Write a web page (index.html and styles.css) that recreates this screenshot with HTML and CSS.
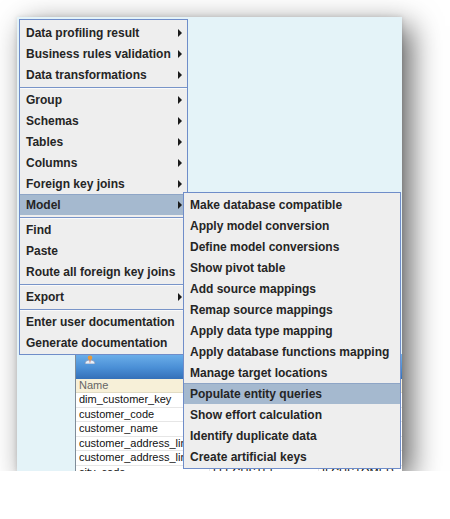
FILE: index.html
```html
<!DOCTYPE html>
<html lang="en">
<head>
    <meta charset="UTF-8">
    <title>Model menu</title>
    <link rel="stylesheet" href="styles.css">
</head>
<body>

<div class="shot">
    <div class="window">
        <div class="window-header">
            <svg class="user-icon" width="12" height="9" viewBox="0 0 12 9">
                <path d="M1 9 C1 6 3 5 6 5 C9 5 11 6 11 9 Z" fill="#e8f0fa" stroke="#7d95b8" stroke-width="0.8"/>
                <circle cx="6" cy="2.8" r="2.3" fill="#e89a3c"/>
                <path d="M5.4 5.2 L6 8.6 L6.6 5.2 Z" fill="#d0522c"/>
            </svg>
        </div>
        <div class="grid">
            <div class="row head">
                <span class="c1">Name</span><span class="c2"></span><span class="c3"></span>
            </div>
            <div class="row"><span class="c1">dim_customer_key</span><span class="c2"></span><span class="c3"></span></div>
            <div class="row"><span class="c1">customer_code</span><span class="c2"></span><span class="c3"></span></div>
            <div class="row"><span class="c1">customer_name</span><span class="c2"></span><span class="c3"></span></div>
            <div class="row"><span class="c1">customer_address_line1</span><span class="c2"></span><span class="c3"></span></div>
            <div class="row"><span class="c1">customer_address_line2</span><span class="c2"></span><span class="c3"></span></div>
            <div class="row"><span class="c1">city_code</span><span class="c2">LLECUSTEL</span><span class="c3">II CUSTOMER</span></div>
        </div>
    </div>

    <div class="menu main-menu">
        <div class="item">Data profiling result<i class="arrow"></i></div>
        <div class="item">Business rules validation<i class="arrow"></i></div>
        <div class="item">Data transformations<i class="arrow"></i></div>
        <div class="sep"></div>
        <div class="item">Group<i class="arrow"></i></div>
        <div class="item">Schemas<i class="arrow"></i></div>
        <div class="item">Tables<i class="arrow"></i></div>
        <div class="item">Columns<i class="arrow"></i></div>
        <div class="item">Foreign key joins<i class="arrow"></i></div>
        <div class="item active">Model<i class="arrow"></i></div>
        <div class="sep"></div>
        <div class="item">Find</div>
        <div class="item">Paste</div>
        <div class="item">Route all foreign key joins</div>
        <div class="sep"></div>
        <div class="item">Export<i class="arrow"></i></div>
        <div class="sep"></div>
        <div class="item">Enter user documentation</div>
        <div class="item">Generate documentation</div>
    </div>

    <div class="menu sub-menu">
        <div class="item">Make database compatible</div>
        <div class="item">Apply model conversion</div>
        <div class="item">Define model conversions</div>
        <div class="item">Show pivot table</div>
        <div class="item">Add source mappings</div>
        <div class="item">Remap source mappings</div>
        <div class="item">Apply data type mapping</div>
        <div class="item">Apply database functions mapping</div>
        <div class="item">Manage target locations</div>
        <div class="item active">Populate entity queries</div>
        <div class="item">Show effort calculation</div>
        <div class="item">Identify duplicate data</div>
        <div class="item">Create artificial keys</div>
    </div>
</div>

</body>
</html>
```

FILE: styles.css
```css
body {
    margin: 0;
    background-color: #fff;
    font-family: "Liberation Sans", Arial, sans-serif;
}
.shot {
    position: relative;
    margin: 17px 0 0 17px;
    width: 385px;
    height: 454px;
    padding-top: 337px;
    box-sizing: border-box;
    background-color: #e4f3f8;
    overflow: hidden;
    box-shadow: 9px 9px 28px rgba(0,0,0,0.62), 0 0 5px rgba(0,0,0,0.12);
}

/* window behind the popup */
.window {
    margin-left: 58px;
    width: 400px;
    border-left: 1px solid #7f8c99;
    background-color: #fff;
}
.window-header {
    position: relative;
    height: 25px;
    background: linear-gradient(#6db0ea, #4a8fd6 55%, #3470b8);
}
.user-icon {
    position: absolute;
    left: 8px;
    top: 1px;
}
.grid {
    font-size: 11px;
    color: #111;
}
.row {
    display: flex;
    height: 14.6px;
    line-height: 13.6px;
    border-bottom: 1px solid #e6e6e6;
    box-sizing: border-box;
    white-space: nowrap;
}
.row.head {
    height: 14px;
    background-color: #f7f0d8;
    color: #666;
    border-bottom: 1px solid #e2dcc4;
}
.row span {
    overflow: hidden;
    padding-left: 3px;
}
.c1 { width: 130px; border-right: 1px solid #e6e6e6; }
.c2 { width: 105px; border-right: 1px solid #e6e6e6; }
.c3 { flex: 1; }

/* popup menus */
.menu {
    position: absolute;
    background-color: #eeeeee;
    border: 1px solid #6f8dc9;
    font-size: 12px;
    font-weight: bold;
    color: #252525;
}
.main-menu {
    left: 2px;
    top: 2px;
    width: 167px;
    padding: 2px 0 1px;
}
.sub-menu {
    left: 166px;
    top: 175px;
    width: 216px;
    padding: 1px 0;
}
.item {
    display: flex;
    align-items: center;
    justify-content: space-between;
    height: 21px;
    padding: 0 5px 0 6px;
    white-space: nowrap;
}
.item.active {
    background-color: #a5b9cf;
    box-shadow: inset 0 1px 0 #8ea5c6;
}
.arrow {
    width: 0;
    height: 0;
    border-left: 4px solid #1a1a1a;
    border-top: 4px solid transparent;
    border-bottom: 4px solid transparent;
}
.sep {
    margin-top: 2px;
    border-top: 1px solid #7894c8;
    border-bottom: 1px solid #fafafa;
}
```
